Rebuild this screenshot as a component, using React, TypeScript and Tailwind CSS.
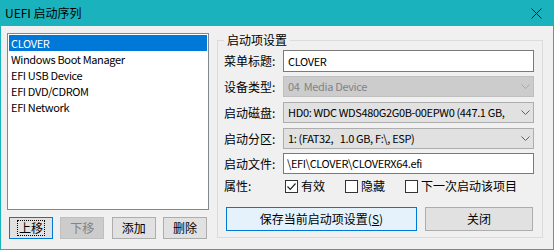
import React from "react";

const font = { fontFamily: '"Noto Sans CJK SC", "Noto Sans", sans-serif' };
// Latin text in the dialog uses a narrower face than the CJK labels
const latin = "text-[11px] tracking-[-0.35px] whitespace-pre";

const entries = ["CLOVER", "Windows Boot Manager", "EFI USB Device", "EFI DVD/CDROM", "EFI Network"];

function Chevron({ color }: { color: string }) {
  return (
    <svg width="9" height="6" viewBox="0 0 9 6" className="shrink-0">
      <path d="M0.5 0.5 L4.5 4.5 L8.5 0.5" fill="none" stroke={color} strokeWidth="1" />
    </svg>
  );
}

function Combo({ text, disabled = false }: { text: string; disabled?: boolean }) {
  return (
    <div
      className={`flex-1 min-w-0 h-[21px] flex items-center pl-[4px] pr-[3px] border overflow-hidden ${
        disabled ? "bg-[#cccccc] border-[#bfbfbf] text-[#838383]" : "bg-[#e1e1e1] border-[#adadad] text-black"
      }`}
    >
      <span className={`flex-1 min-w-0 overflow-hidden ${latin}`}>{text}</span>
      <Chevron color={disabled ? "#a8a8a8" : "#606060"} />
    </div>
  );
}

function Field({ label, children, className = "" }: { label: string; children: React.ReactNode; className?: string }) {
  return (
    <div className={`flex items-center min-w-0 ${className}`}>
      <div className="w-[59px] shrink-0">{label}</div>
      {children}
    </div>
  );
}

function Check({ label, checked = false, className = "" }: { label: string; checked?: boolean; className?: string }) {
  return (
    <div className={`flex items-center gap-[3px] ${className}`}>
      <div className="w-[13px] h-[13px] shrink-0 border border-[#333333] bg-white flex items-center justify-center">
        {checked && (
          <svg width="11" height="11" viewBox="0 0 11 11">
            <path d="M1.5 5.5 L4.3 8.3 L9.5 2.5" fill="none" stroke="#222" strokeWidth="1.2" />
          </svg>
        )}
      </div>
      <span>{label}</span>
    </div>
  );
}

function SmallButton({ label, variant }: { label: string; variant?: "focus" | "disabled" }) {
  const cls =
    variant === "focus"
      ? "border-[#0078d7] bg-[#e1e1e1] text-black"
      : variant === "disabled"
      ? "border-[#bfbfbf] bg-[#cccccc] text-[#838383]"
      : "border-[#adadad] bg-[#e1e1e1] text-black";
  return (
    <div className={`w-[44px] h-[22px] shrink-0 border flex items-center justify-center ${cls}`}>
      <span className={variant === "focus" ? "outline outline-1 outline-dotted outline-black px-[1px] leading-[14px]" : ""}>
        {label}
      </span>
    </div>
  );
}

export default function App() {
  return (
    <div className="w-[554px] h-[250px] flex flex-col bg-[#1ab2bd] text-[12px] text-black" style={font}>
      {/* title bar */}
      <div className="h-[26px] flex items-center justify-between pl-[5px] pr-[12px] shrink-0">
        <span>UEFI 启动序列</span>
        <svg width="11" height="11" viewBox="0 0 11 11">
          <path d="M0.5 0.5 L10.5 10.5 M10.5 0.5 L0.5 10.5" stroke="#1a1a1a" strokeWidth="1" />
        </svg>
      </div>

      {/* body */}
      <div className="flex-1 mx-[1px] mb-[1px] bg-[#f0f0f0] flex pl-[6px] pr-[10px] pt-[6px] gap-[8px]">
        <div className="w-[202px] shrink-0 flex flex-col">
          <div className="mt-[1px] h-[177px] border border-[#828790] bg-white p-[1px] leading-[16px]">
            {entries.map((e, i) => (
              <div key={e} className={`h-[16px] pl-[2px] ${latin} ${i === 0 ? "bg-[#0078d7] text-white" : ""}`}>
                {e}
              </div>
            ))}
          </div>
          <div className="mt-[7px] px-[2px] flex justify-between">
            <SmallButton label="上移" variant="focus" />
            <SmallButton label="下移" variant="disabled" />
            <SmallButton label="添加" />
            <SmallButton label="删除" />
          </div>
        </div>

        <fieldset className="flex-1 min-w-0 h-[206px] border border-[#dcdcdc] pl-[6px] pr-[8px] pt-[2px] flex flex-col">
          <legend className="ml-0 px-[3px] leading-[16px]">启动项设置</legend>
          <Field label="菜单标题:">
            <div className={`flex-1 min-w-0 h-[22px] border border-[#7a7a7a] bg-white flex items-center pl-[4px] ${latin}`}>CLOVER</div>
          </Field>
          <Field label="设备类型:" className="mt-[4px]">
            <Combo text="04  Media Device" disabled />
          </Field>
          <Field label="启动磁盘:" className="mt-[5px]">
            <Combo text="HD0: WDC WDS480G2G0B-00EPW0 (447.1 GB," />
          </Field>
          <Field label="启动分区:" className="mt-[5px]">
            <Combo text="1: (FAT32,   1.0 GB, F:\, ESP)" />
          </Field>
          <Field label="启动文件:" className="mt-[4px]">
            <div className={`flex-1 min-w-0 h-[21px] border border-[#7a7a7a] bg-white flex items-center pl-[3px] overflow-hidden ${latin}`}>
              \EFI\CLOVER\CLOVERX64.efi
            </div>
          </Field>
          <Field label="属性:" className="mt-[4px] h-[16px]">
            <div className="flex items-center pl-[2px]">
              <Check label="有效" checked className="w-[60px]" />
              <Check label="隐藏" className="w-[60px]" />
              <Check label="下一次启动该项目" />
            </div>
          </Field>
          <div className="mt-[13px] flex gap-[8px] pl-[2px]">
            <div className="w-[191px] h-[24px] shrink-0 border border-[#0078d7] bg-[#e5f1fb] flex items-center justify-center">
              <span>
                保存当前启动项设置(<span className="underline">S</span>)
              </span>
            </div>
            <div className="w-[108px] h-[24px] shrink-0 border border-[#adadad] bg-[#e1e1e1] flex items-center justify-center">关闭</div>
          </div>
        </fieldset>
      </div>
    </div>
  );
}
